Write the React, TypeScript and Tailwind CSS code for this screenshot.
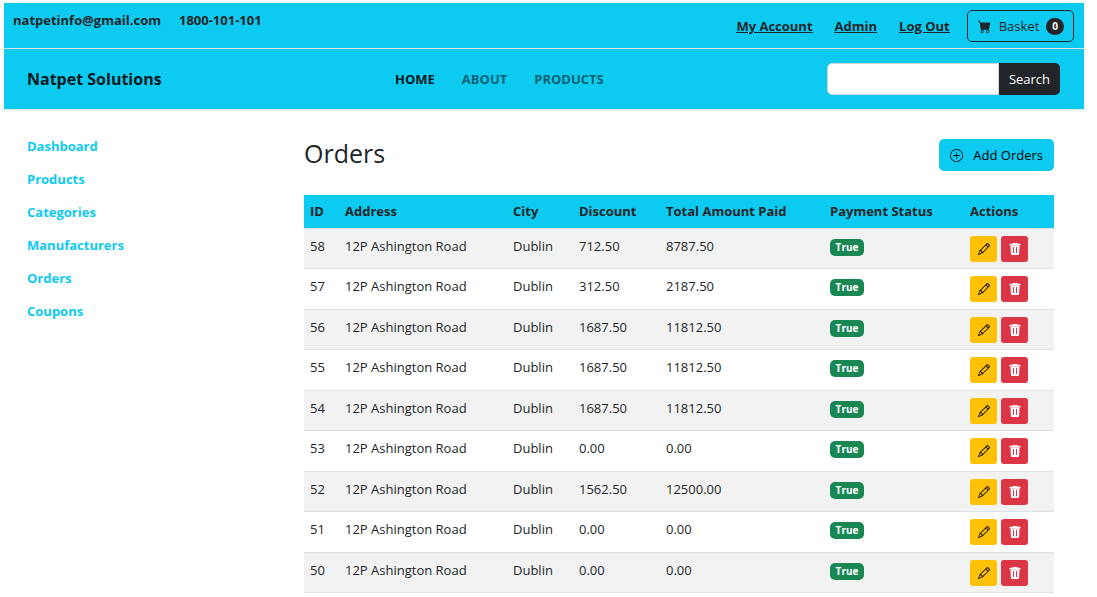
import { BsCartFill, BsPencil, BsPlusCircle } from 'react-icons/bs';

const orders = [
  { id: 58, discount: '712.50', total: '8787.50' },
  { id: 57, discount: '312.50', total: '2187.50' },
  { id: 56, discount: '1687.50', total: '11812.50' },
  { id: 55, discount: '1687.50', total: '11812.50' },
  { id: 54, discount: '1687.50', total: '11812.50' },
  { id: 53, discount: '0.00', total: '0.00' },
  { id: 52, discount: '1562.50', total: '12500.00' },
  { id: 51, discount: '0.00', total: '0.00' },
  { id: 50, discount: '0.00', total: '0.00' },
];

const sections = ['Dashboard', 'Products', 'Categories', 'Manufacturers', 'Orders', 'Coupons'];

function TrashIcon() {
  return (
    <svg viewBox="0 0 12 12" className="size-3" fill="currentColor" aria-hidden="true">
      <path d="M4 0h4l.5.8H11a.5.5 0 0 1 .5.5V2a.5.5 0 0 1-.5.5H1A.5.5 0 0 1 .5 2v-.7A.5.5 0 0 1 1 .8h2.500z" />
      <path fillRule="evenodd" d="M1.500 2.500h9l-.4 8.200A1.300 1.300 0 0 1 8.800 12H3.200a1.300 1.300 0 0 1-1.300-1.300zM4 4v6h1V4zM7 4v6h1V4z" />
    </svg>
  );
}

function TopBar() {
  return (
    <div className="flex h-[45px] items-start justify-between pr-[10px] pl-[9px]">
      <div className="flex gap-[18px] pt-[7px] font-bold">
        <span>natpetinfo@gmail.com</span>
        <span>1800-101-101</span>
      </div>
      <div className="flex items-center pt-[7px]">
        <nav className="mr-[17px] flex gap-[22px] font-bold underline">
          <a href="#account">My Account</a>
          <a href="#admin">Admin</a>
          <a href="#logout">Log Out</a>
        </nav>
        <button className="flex h-8 items-center rounded-[5px] border border-[#212529] pr-[9px] pl-[10px]">
          <BsCartFill className="mr-2 size-[13px]" />
          <span>Basket</span>
          <span className="ml-[7px] rounded-full bg-[#212529] px-[6px] text-[10px] leading-[17px] font-bold text-white">0</span>
        </button>
      </div>
    </div>
  );
}

function NavBar() {
  return (
    <div className="flex h-[61px] items-center border-t border-[#dee2e6] pr-6 pl-[23px]">
      <a href="#home" className="w-[368px] text-[16px] font-bold text-black/90">Natpet Solutions</a>
      <nav className="flex flex-1 gap-[27px] font-bold text-black/55">
        <a href="#home" className="text-black/90">HOME</a>
        <a href="#about">ABOUT</a>
        <a href="#products">PRODUCTS</a>
      </nav>
      <form className="flex h-8" onSubmit={(e) => e.preventDefault()}>
        <input
          type="search"
          aria-label="Search products"
          className="w-[172px] rounded-l-[5px] border border-[#ced4da] bg-white px-[10px]"
        />
        <button type="submit" className="w-[61px] rounded-r-[5px] bg-[#212529] text-white">Search</button>
      </form>
    </div>
  );
}

function OrdersTable() {
  return (
    <table className="w-full table-fixed border-collapse text-left">
      <colgroup>
        <col className="w-[35px]" />
        <col className="w-[168px]" />
        <col className="w-[66px]" />
        <col className="w-[87px]" />
        <col className="w-[164px]" />
        <col className="w-[140px]" />
        <col />
      </colgroup>
      <thead>
        <tr className="h-[33px] border-b border-[#dee2e6] bg-[#0dcaf0]">
          {['ID', 'Address', 'City', 'Discount', 'Total Amount Paid', 'Payment Status', 'Actions'].map((h) => (
            <th key={h} scope="col" className="px-[6px] font-bold whitespace-nowrap">{h}</th>
          ))}
        </tr>
      </thead>
      <tbody>
        {orders.map((o) => (
          <tr key={o.id} className="h-10 border-b border-[#dee2e6] align-top odd:bg-[#f2f2f2] even:h-[41px]">
            <td className="px-[6px] pt-[7px]">{o.id}</td>
            <td className="px-[6px] pt-[7px]">12P Ashington Road</td>
            <td className="px-[6px] pt-[7px]">Dublin</td>
            <td className="px-[6px] pt-[7px]">{o.discount}</td>
            <td className="px-[6px] pt-[7px]">{o.total}</td>
            <td className="px-[6px] pt-[10px]">
              <span className="block w-[34px] rounded-[5px] bg-[#198754] text-center text-[10px] leading-[17px] font-bold text-white">True</span>
            </td>
            <td className="px-[6px] pt-[7px]">
              <div className="flex gap-1">
                <button aria-label={`Edit order ${o.id}`} className="flex h-[26px] w-[27px] items-center justify-center rounded-[3px] bg-[#ffc107] text-black">
                  <BsPencil className="size-3" />
                </button>
                <button aria-label={`Delete order ${o.id}`} className="flex h-[26px] w-[27px] items-center justify-center rounded-[3px] bg-[#dc3545] text-white">
                  <TrashIcon />
                </button>
              </div>
            </td>
          </tr>
        ))}
      </tbody>
    </table>
  );
}

export default function App() {
  return (
    <div className="min-h-screen bg-white pt-[3px] pr-[13px] pl-1 font-['Open_Sans','Noto_Sans',sans-serif] text-[13px] leading-5 text-[#212529]">
      <header className="bg-[#0dcaf0] shadow-sm">
        <TopBar />
        <NavBar />
      </header>
      <div className="flex pt-[27px] pr-[30px] pl-[23px]">
        <nav className="flex w-[277px] shrink-0 flex-col gap-[13px] font-bold text-[#0dcaf0]">
          {sections.map((s) => (
            <a key={s} href={`#${s.toLowerCase()}`}>{s}</a>
          ))}
        </nav>
        <main className="min-w-0 flex-1">
          <div className="mb-6 flex items-start justify-between pt-[3px]">
            <h1 className="text-[25px] leading-7 font-medium">Orders</h1>
            <button className="flex h-8 items-center gap-[10px] rounded-[5px] bg-[#0dcaf0] px-[11px] text-black">
              <BsPlusCircle className="size-[13px]" />
              Add Orders
            </button>
          </div>
          <OrdersTable />
        </main>
      </div>
    </div>
  );
}
